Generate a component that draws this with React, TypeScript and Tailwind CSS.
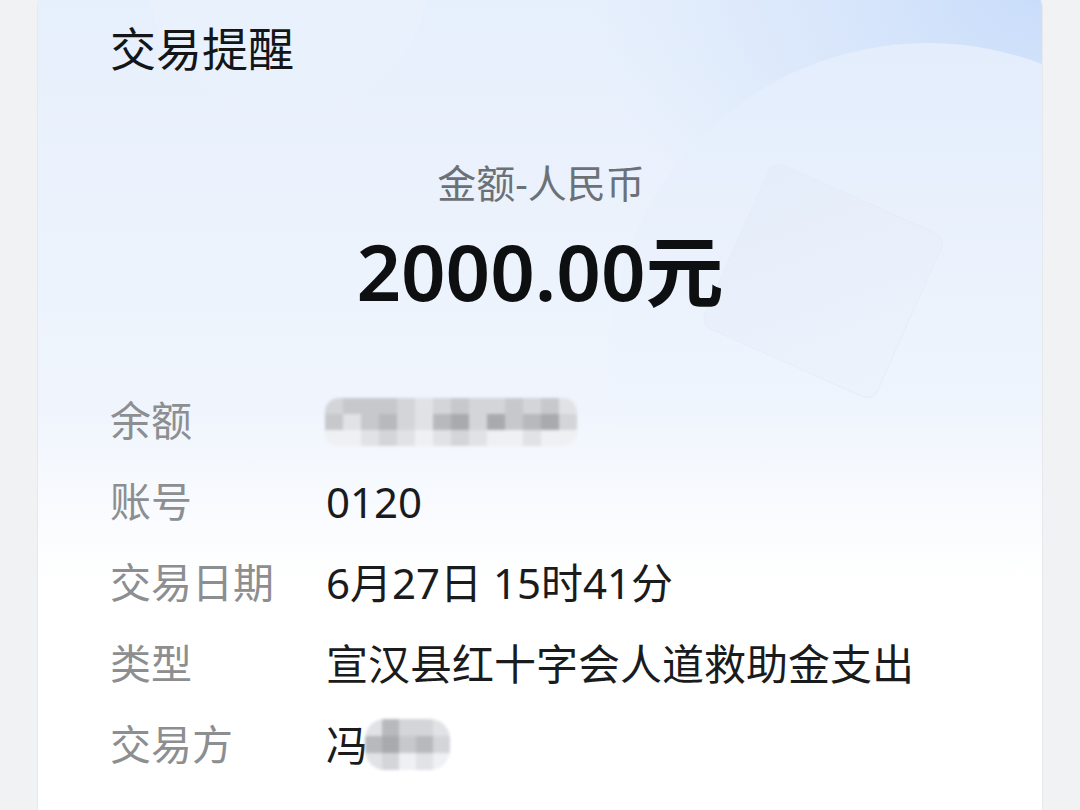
import React from "react";

const font = { fontFamily: '"Noto Sans", "Noto Sans CJK SC", sans-serif' };

// mosaic shades, light -> dark
const shade = [
  "bg-[#eef0f3]",
  "bg-[#e0e2e6]",
  "bg-[#d3d5d9]",
  "bg-[#c6c8cc]",
  "bg-[#b7b9bd]",
  "bg-[#a8aaae]",
];

const balanceMosaic = [
  [2, 3, 3, 3, 2, 1, 2, 3, 2, 2, 3, 2, 3, 1],
  [3, 1, 3, 4, 2, 1, 4, 5, 2, 5, 3, 4, 5, 2],
  [0, 0, 1, 2, 1, 0, 1, 2, 1, 0, 0, 1, 0, 0],
];

const nameMosaic = [
  [1, 4, 2, 2, 1],
  [4, 5, 3, 4, 2],
  [1, 2, 0, 1, 0],
];

const Mosaic = ({ grid, cell, className }: { grid: number[][]; cell: string; className: string }) => (
  <div className={`flex flex-col overflow-hidden rounded-[14px] blur-[1.5px] ${className}`}>
    {grid.map((row, i) => (
      <div key={i} className="flex">
        {row.map((v, j) => (
          <div key={j} className={`${cell} ${shade[v]}`} />
        ))}
      </div>
    ))}
  </div>
);

const rows = [
  { label: "余额", value: <Mosaic grid={balanceMosaic} cell="w-[18px] h-[16px]" className="ml-[-1px] mt-[2px]" /> },
  { label: "账号", value: "0120" },
  { label: "交易日期", value: "6月27日 15时41分" },
  { label: "类型", value: "宣汉县红十字会人道救助金支出" },
  {
    label: "交易方",
    value: (
      <div className="flex items-center">
        <span>冯</span>
        <Mosaic grid={nameMosaic} cell="w-[17px] h-[17px]" className="ml-[-3px] rounded-[20px]" />
      </div>
    ),
  },
];

export default function App() {
  return (
    <div className="h-[810px] w-full overflow-hidden bg-[#f1f2f4]" style={font}>
      <div className="relative ml-[37px] mt-[-14px] h-[850px] w-[1006px] overflow-hidden rounded-[22px] border border-[#e6e8eb] bg-white">
        {/* background wash */}
        <div className="absolute inset-0 bg-gradient-to-b from-[#e6effc] via-[#f0f5fd] via-50% to-white to-70%" />
        <div className="absolute inset-0 bg-[radial-gradient(ellipse_560px_420px_at_100%_0%,#c8dcfa_0%,#d8e6fb_35%,rgba(230,239,252,0)_80%)]" />
        <div className="absolute left-[570px] top-[56px] h-[640px] w-[640px] rounded-full bg-gradient-to-b from-[#e3edfc] via-[#eef4fd] to-transparent to-60%" />
        <div className="absolute left-[110px] top-[-150px] h-[280px] w-[280px] rounded-full bg-[#e9f1fc] opacity-60" />
        <div className="absolute left-[690px] top-[204px] h-[180px] w-[190px] rotate-[24deg] rounded-[12px] border border-[#e3ebf7] bg-gradient-to-br from-[#e5edfa] to-[#edf3fc] opacity-80" />

        <div className="relative flex flex-col">
          <div className="pl-[72px] pt-[33px] text-[46px] font-normal leading-[56px] text-[#141517]">交易提醒</div>

          <div className="mt-[83px] text-center text-[39px] leading-[48px] text-[#6b7177] pl-[2px]">金额-人民币</div>
          <div className="mt-[16px] text-center text-[78px] font-semibold leading-[96px] text-[#0e0f10]">
            2000.00元
          </div>

          <div className="mt-[61px] flex flex-col pl-[72px]">
            {rows.map((r) => (
              <div key={r.label} className="flex h-[81px] items-center">
                <div className="w-[216px] shrink-0 text-[41px] text-[#8d8e90]">{r.label}</div>
                <div className="text-[42px] text-[#1a1b1d]">{r.value}</div>
              </div>
            ))}
          </div>
        </div>
      </div>
    </div>
  );
}
